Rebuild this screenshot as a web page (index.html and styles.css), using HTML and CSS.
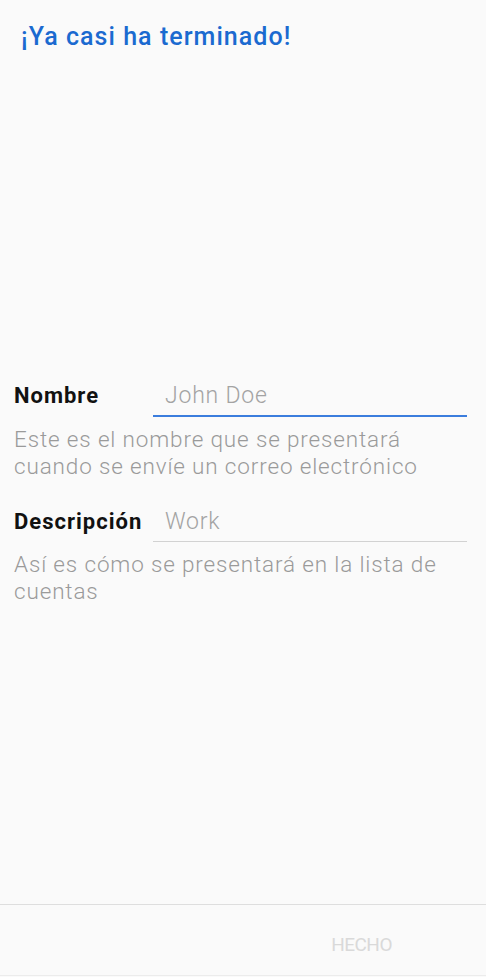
FILE: index.html
```html
<!DOCTYPE html>
<html lang="es">
<head>
<meta charset="utf-8">
<title>¡Ya casi ha terminado!</title>
<link rel="stylesheet" href="styles.css">
</head>
<body>
<div class="screen">
  <header class="header">
    <h1 class="title">¡Ya casi ha terminado!</h1>
  </header>
  <main class="content">
    <div class="field">
      <div class="field-row">
        <label class="field-label" for="name">Nombre</label>
        <div class="field-input focused">
          <input id="name" class="input" type="text" placeholder="John Doe">
        </div>
      </div>
      <p class="helper">Este es el nombre que se presentará cuando se envíe un correo electrónico</p>
    </div>
    <div class="field">
      <div class="field-row">
        <label class="field-label" for="desc">Descripción</label>
        <div class="field-input">
          <input id="desc" class="input" type="text" placeholder="Work">
        </div>
      </div>
      <p class="helper">Así es cómo se presentará en la lista de cuentas</p>
    </div>
  </main>
  <footer class="footer">
    <button class="done" type="button" disabled>HECHO</button>
  </footer>
</div>
</body>
</html>
```

FILE: styles.css
```css
* { box-sizing: border-box; }
html, body {
  margin: 0;
  padding: 0;
  background: #fafafa;
  font-family: Roboto, "Noto Sans", "Liberation Sans", sans-serif;
}
.screen {
  height: 977px;
  display: flex;
  flex-direction: column;
}
.header {
  padding: 21px 0 0 21px;
}
.title {
  margin: 0;
  font-size: 25px;
  line-height: 32px;
  font-weight: 500;
  color: #1b6ad0;
  letter-spacing: 1.05px;
}
.content {
  flex: 1;
  padding: 329px 19px 0 14px;
}
.field {
  margin-bottom: 28px;
}
.field-row {
  display: flex;
  align-items: baseline;
}
.field-label {
  width: 139px;
  flex: none;
  font-size: 22px;
  font-weight: 700;
  color: #111;
  line-height: 28px;
  letter-spacing: 1px;
}
.field-input {
  flex: 1;
  border-bottom: 1px solid #d2d2d2;
  padding-bottom: 5px;
}
.field-input.focused {
  border-bottom: 2px solid #3b7ddd;
}
.input {
  display: block;
  width: 100%;
  border: 0;
  outline: 0;
  background: transparent;
  padding: 0 0 0 12px;
  margin: 0;
  font-family: inherit;
  font-size: 23px;
  font-weight: 300;
  line-height: 28px;
  height: 28px;
  letter-spacing: 0.8px;
  color: #333;
}
.input::placeholder {
  color: #a3a3a3;
  opacity: 1;
}
.helper {
  margin: 9px 0 0;
  font-size: 22.5px;
  font-weight: 300;
  line-height: 27px;
  letter-spacing: 0.85px;
  color: #9a9a9a;
}
.footer {
  height: 72px;
  border-top: 1px solid #dedede;
  border-bottom: 1px solid #ececec;
  margin-bottom: 1px;
  display: flex;
  justify-content: flex-end;
  align-items: center;
  padding-right: 94px;
}
.done {
  border: 0;
  background: transparent;
  font-family: inherit;
  font-size: 19px;
  font-weight: 400;
  color: #d9d9d9;
  padding: 0;
  margin-top: 8px;
  letter-spacing: -0.5px;
}
```
